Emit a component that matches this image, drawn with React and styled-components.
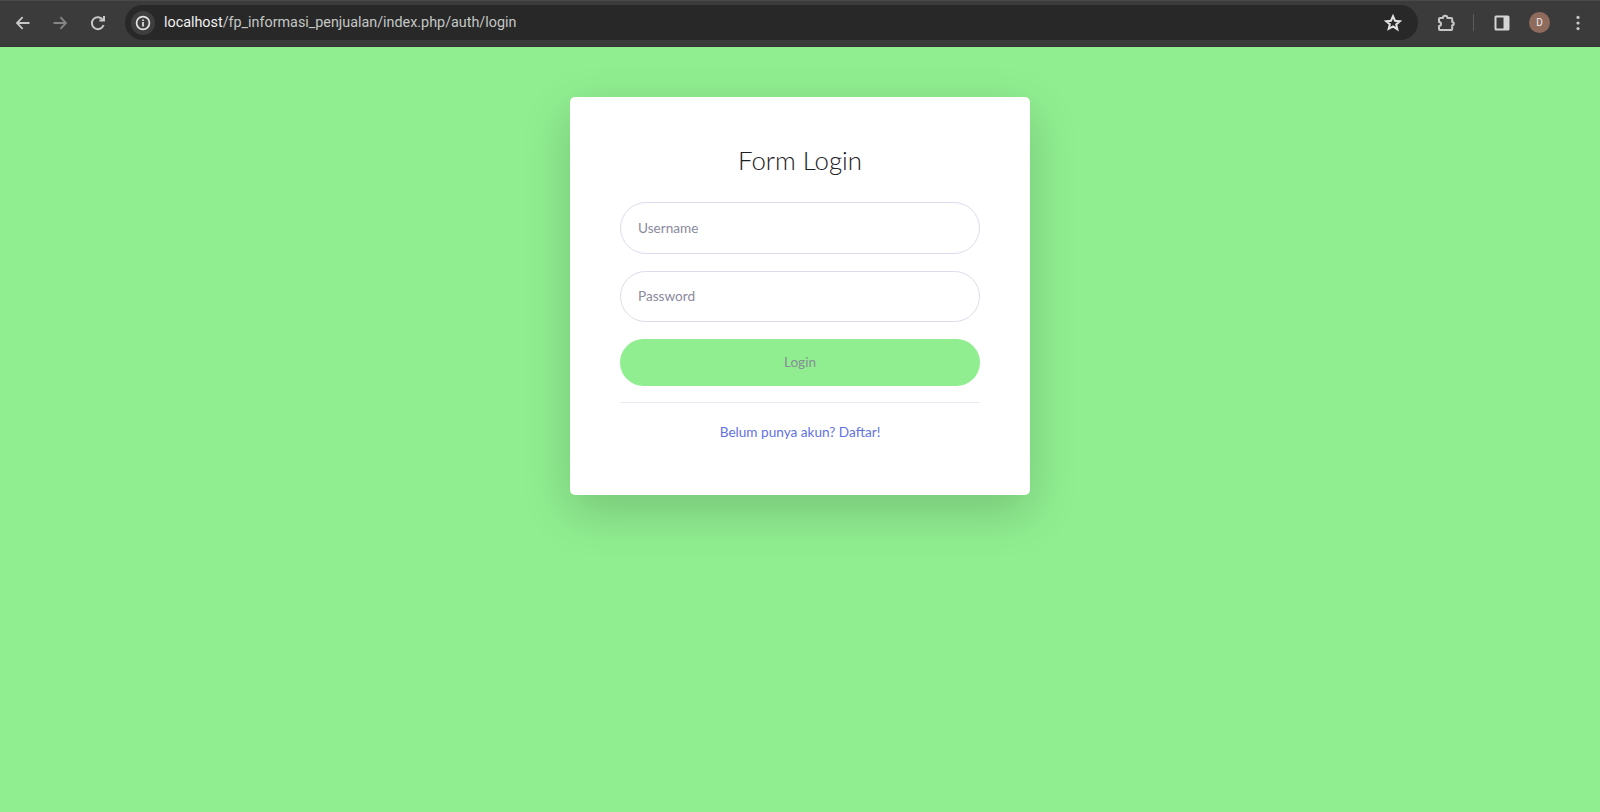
import React from 'react';
import styled, { createGlobalStyle } from 'styled-components';

const GlobalStyle = createGlobalStyle`
    html, body {
        margin: 0;
        height: 100%;
        overflow: hidden;
    }
    #root {
        height: 100%;
    }
    * {
        box-sizing: border-box;
    }
`;

const Screen = styled.div`
    display: flex;
    flex-direction: column;
    height: 812px;
    background: #90ee90;
    font-family: "Lato", "Liberation Sans", sans-serif;
`;

const Toolbar = styled.div`
    display: flex;
    align-items: center;
    height: 47px;
    padding: 0 0 2px 9px;
    background: #3b3b3b;
    border-top: 1px solid #4a4a4a;
    border-bottom: 1px solid #333;
    flex-shrink: 0;
`;

const NavButton = styled.div`
    display: flex;
    align-items: center;
    justify-content: center;
    width: 28px;
    height: 28px;
    margin-right: ${p => p.$gap || 9}px;
    color: ${p => (p.$dim ? '#858585' : '#c7c7c7')};
`;

const Omnibox = styled.div`
    display: flex;
    align-items: center;
    width: 1293px;
    height: 35px;
    margin-left: 3px;
    padding: 0 16px 0 6px;
    background: #282828;
    border-radius: 18px;
`;

const InfoChip = styled.div`
    display: flex;
    align-items: center;
    justify-content: center;
    width: 24px;
    height: 24px;
    margin-right: 9px;
    border-radius: 50%;
    background: #3e3e3e;
    color: #e3e3e3;
`;

const Url = styled.div`
    flex: 1;
    font-family: "Roboto", "Liberation Sans", sans-serif;
    font-size: 14.35px;
    color: #c4c7c5;
    span {
        color: #f1f1f1;
    }
`;

const Actions = styled.div`
    display: flex;
    align-items: center;
    margin-left: 18px;
    color: #c7c7c7;
`;

const Divider = styled.div`
    width: 1px;
    height: 17px;
    margin: 0 20px 0 17px;
    background: #5c5c5c;
`;

const Avatar = styled.div`
    display: flex;
    align-items: center;
    justify-content: center;
    width: 21px;
    height: 21px;
    margin: 0 26px 0 19px;
    border-radius: 50%;
    background: #8f6b5e;
    color: #eee;
    font-family: "Roboto", sans-serif;
    font-size: 10px;
`;

const Page = styled.main`
    flex: 1;
    display: flex;
    justify-content: center;
    align-items: flex-start;
    padding-top: 50px;
`;

const Card = styled.div`
    width: 460px;
    height: 398px;
    padding: 48px 50px;
    background: #fff;
    border-radius: 5px;
    box-shadow: 0 16px 48px rgba(0, 0, 0, 0.175);
`;

const Title = styled.h1`
    margin: 0 0 25px;
    height: 32px;
    font-size: 25.8px;
    line-height: 31px;
    font-weight: 300;
    text-align: center;
    color: #1c2026;
`;

const Field = styled.input`
    display: block;
    width: 100%;
    height: 51.6px;
    margin-bottom: 17px;
    padding: 0 17px;
    border: 1px solid #dcdcec;
    border-radius: 26px;
    outline: none;
    background: #fff;
    font-family: inherit;
    font-size: 13.6px;
    &::placeholder {
        color: #8a8a9c;
        opacity: 1;
    }
`;

const LoginButton = styled.button`
    display: block;
    width: 100%;
    height: 46.4px;
    border: none;
    border-radius: 24px;
    background: #90ee90;
    color: #868e96;
    font-family: inherit;
    font-size: 13.6px;
`;

const Rule = styled.hr`
    margin: 16.6px 0 16px;
    border: none;
    border-top: 1px solid #e8e8f0;
`;

const LinkRow = styled.div`
    margin-top: 19px;
    text-align: center;
    font-size: 13.6px;
    line-height: 20px;
`;

const RegisterLink = styled.a`
    color: #5f72e4;
    text-decoration: none;
`;

const Back = () => (
    <svg width="18" height="18" viewBox="0 0 18 18" fill="none" stroke="currentColor" strokeWidth="1.8">
        <path d="M15.5 9H3M8.6 3.2L3 9l5.6 5.8" />
    </svg>
);

const Forward = () => (
    <svg width="18" height="18" viewBox="0 0 18 18" fill="none" stroke="currentColor" strokeWidth="1.8">
        <path d="M2.5 9H15M9.4 3.2L15 9l-5.6 5.8" />
    </svg>
);

const Reload = () => (
    <svg width="18" height="18" viewBox="0 0 18 18" fill="none" stroke="currentColor" strokeWidth="2">
        <path d="M14.6 11a6 6 0 1 1-.6-5" />
        <path d="M15 2v4.6h-4.6" />
    </svg>
);

const Info = () => (
    <svg width="16" height="16" viewBox="0 0 16 16" fill="none" stroke="currentColor" strokeWidth="1.7">
        <circle cx="8" cy="8" r="6.4" />
        <path d="M8 7v4.4M8 4.4v1.6" />
    </svg>
);

const Star = () => (
    <svg width="18" height="18" viewBox="0 0 18 18" fill="none" stroke="#e3e3e3" strokeWidth="2">
        <path d="M9 2.2l2 4.5 4.9.5-3.7 3.2 1.1 4.8L9 12.4l-4.3 2.4 1.1-4.6-3.7-3 4.9-.5z" />
    </svg>
);

const Puzzle = () => (
    <svg width="20" height="20" viewBox="0 0 20 20" fill="none" stroke="currentColor" strokeWidth="2" strokeLinejoin="round">
        <path d="M4 5H7a2.2 2.2 0 0 1 4.4 0H15a1.2 1.2 0 0 1 1.2 1.2V9a1.6 1.6 0 0 1 0 3.2V16a1 1 0 0 1-1 1H4a1 1 0 0 1-1-1V13a2 2 0 0 0 0-4V6a1 1 0 0 1 1-1z" />
    </svg>
);

const SidePanel = () => (
    <svg width="16" height="16" viewBox="0 0 16 16">
        <rect x="0.5" y="0.5" width="15" height="15" rx="1.5" fill="#d5d5d5" />
        <rect x="2.5" y="2.5" width="7" height="11" fill="#3b3b3b" />
    </svg>
);

const Dots = () => (
    <svg width="4" height="16" viewBox="0 0 4 16" fill="#c7c7c7">
        <circle cx="2" cy="2.4" r="1.6" />
        <circle cx="2" cy="8" r="1.6" />
        <circle cx="2" cy="13.6" r="1.6" />
    </svg>
);

export default function App() {
    return (
        <>
            <GlobalStyle />
            <Screen>
                <Toolbar>
                    <NavButton><Back /></NavButton>
                    <NavButton $dim $gap={10}><Forward /></NavButton>
                    <NavButton $gap={10}><Reload /></NavButton>
                    <Omnibox>
                        <InfoChip><Info /></InfoChip>
                        <Url><span>localhost</span>/fp_informasi_penjualan/index.php/auth/login</Url>
                        <Star />
                    </Omnibox>
                    <Actions>
                        <Puzzle />
                        <Divider />
                        <SidePanel />
                        <Avatar>D</Avatar>
                        <Dots />
                    </Actions>
                </Toolbar>
                <Page>
                    <Card>
                        <Title>Form Login</Title>
                        <Field placeholder="Username" />
                        <Field type="password" placeholder="Password" />
                        <LoginButton>Login</LoginButton>
                        <Rule />
                        <LinkRow>
                            <RegisterLink href="#">Belum punya akun? Daftar!</RegisterLink>
                        </LinkRow>
                    </Card>
                </Page>
            </Screen>
        </>
    );
}
